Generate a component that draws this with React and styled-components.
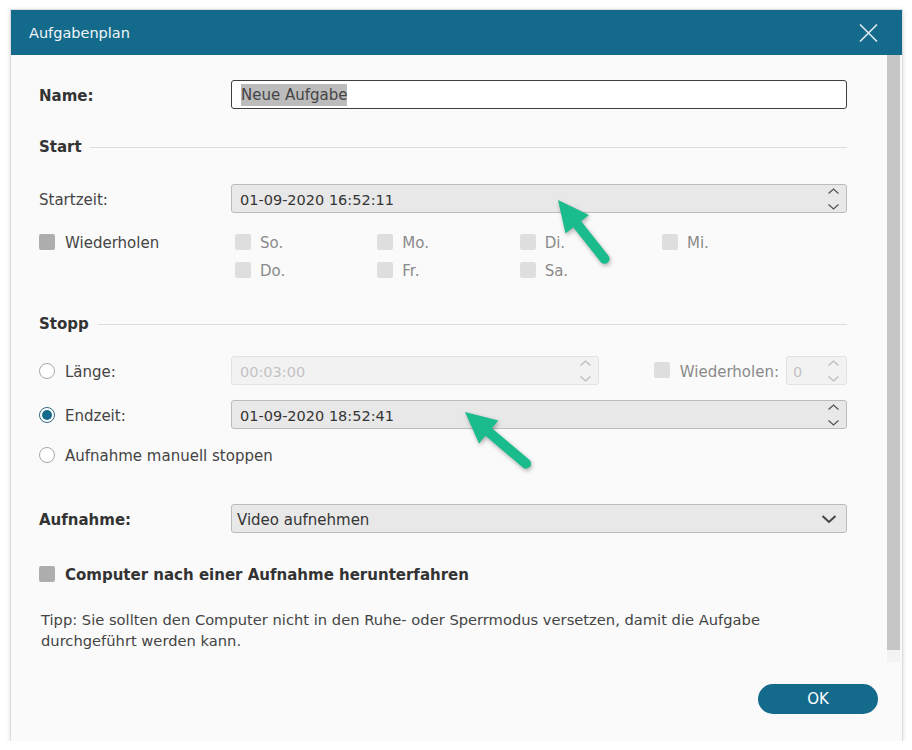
import React from "react";
import styled, { createGlobalStyle } from "styled-components";

const Global = createGlobalStyle`
  html, body { margin: 0; padding: 0; background: #ffffff; }
  body { font-family: "DejaVu Sans", Verdana, sans-serif; color: #3c3c3c; }
`;

const TEAL = "#136a8b";

const Page = styled.div`
  padding: 10px 0 0 11px;
`;

const Window = styled.div`
  position: relative;
  width: 891px;
  height: 731px;
  background: #fafafa;
  box-shadow: 0 0 0 1px #dcdcdc, 0 1px 5px rgba(0, 0, 0, 0.22);
  display: flex;
  flex-direction: column;
`;

const TitleBar = styled.div`
  height: 45px;
  flex: none;
  background: ${TEAL};
  display: flex;
  align-items: center;
  justify-content: space-between;
  padding: 0 24px 0 18px;
`;

const Title = styled.div`
  color: #f2f6f8;
  font-size: 14.5px;
`;

const CloseIcon = styled.svg`
  width: 19px;
  height: 18px;
  display: block;
`;

const Middle = styled.div`
  display: flex;
  height: 607px;
  flex: none;
`;

const Content = styled.div`
  flex: 1;
  padding: 25px 40px 0 28px;
  display: flex;
  flex-direction: column;
`;

const ScrollTrack = styled.div`
  width: 13px;
  margin-right: 2px;
  display: flex;
  flex-direction: column;
  background: #f3f3f3;
`;

const Thumb = styled.div`
  height: 595px;
  background: #c6c6c6;
`;

const Footer = styled.div`
  flex: 1;
  display: flex;
  justify-content: flex-end;
  align-items: flex-start;
  padding: 22px 24px 0 0;
`;

const OkButton = styled.button`
  width: 120px;
  height: 30px;
  border: none;
  border-radius: 15px;
  background: ${TEAL};
  color: #ffffff;
  font-family: "DejaVu Sans", sans-serif;
  font-size: 15px;
  padding: 0;
`;

const Row = styled.div`
  display: grid;
  grid-template-columns: 192px 1fr;
  align-items: center;
  height: ${(p) => p.$h}px;
  margin-top: ${(p) => p.$mt || 0}px;
  flex: none;
`;

const Label = styled.div`
  font-size: 15px;
  font-weight: ${(p) => (p.$bold ? 700 : 400)};
  color: ${(p) => (p.$bold ? "#333" : "#444")};
  display: flex;
  align-items: center;
  gap: 10px;
  white-space: nowrap;
  line-height: 20px;
  padding-top: 2px;
`;

const Heading = styled.div`
  display: flex;
  align-items: center;
  gap: ${(p) => p.$gap}px;
  height: 20px;
  margin-top: ${(p) => p.$mt}px;
  font-size: 15px;
  font-weight: 700;
  color: #333;
  flex: none;
  &::after {
    content: "";
    flex: 1;
    border-top: 1px solid #dcdcdc;
  }
`;

const TextInput = styled.div`
  height: 29px;
  box-sizing: border-box;
  border: 1px solid #3e3e3e;
  border-radius: 3px;
  background: #ffffff;
  display: flex;
  align-items: center;
  padding-left: 9px;
`;

const Selected = styled.span`
  background: #bcbcbc;
  color: #454545;
  font-size: 15px;
  line-height: 21px;
  padding-top: 1px;
`;

const SpinBox = styled.div`
  height: 29px;
  width: ${(p) => (p.$w ? `${p.$w}px` : "auto")};
  box-sizing: border-box;
  border: 1px solid ${(p) => (p.$disabled ? "#e2e2e2" : "#bcbcbc")};
  border-radius: 3px;
  background: ${(p) => (p.$disabled ? "#f2f2f2" : "#e8e8e8")};
  display: flex;
  align-items: center;
  padding-left: ${(p) => p.$pl || 8}px;
  padding-right: 6px;
  font-size: 14.5px;
  color: ${(p) => (p.$disabled ? "#c2c2c2" : "#353535")};
`;

const Value = styled.div`
  flex: 1;
  padding-top: 2px;
`;

const SpinIcon = styled.svg`
  width: 13px;
  height: 24px;
  display: block;
`;

const Spinner = ({ disabled }) => (
  <SpinIcon viewBox="0 0 13 24">
    <path
      d="M1.5 6.5 L6.5 2 L11.5 6.5 M1.5 17.5 L6.5 22 L11.5 17.5"
      fill="none"
      stroke={disabled ? "#bdbdbd" : "#555"}
      strokeWidth="1.3"
    />
  </SpinIcon>
);

const Box = styled.span`
  width: 16px;
  height: 16px;
  border-radius: 2px;
  background: ${(p) => (p.$dark ? "#adadad" : "#dedede")};
  flex: none;
  display: inline-block;
  margin-top: -2px;
`;

const Radio = styled.span`
  width: 16px;
  height: 16px;
  box-sizing: border-box;
  border-radius: 50%;
  border: 1px solid ${(p) => (p.$checked ? "#2d6a86" : "#a8a8a8")};
  background: #ffffff;
  flex: none;
  display: inline-flex;
  align-items: center;
  justify-content: center;
  margin-top: -2px;
  &::after {
    content: "";
    width: 10px;
    height: 10px;
    border-radius: 50%;
    background: ${(p) => (p.$checked ? TEAL : "transparent")};
  }
`;

const DayGrid = styled.div`
  display: grid;
  grid-template-columns: 192px repeat(4, 142.33px);
  grid-auto-rows: 28px;
  margin-top: 15px;
  flex: none;
  align-items: center;
`;

const Day = styled.div`
  display: flex;
  align-items: center;
  gap: 9px;
  padding: 2px 0 0 4px;
  font-size: 15px;
  color: #8a8a8a;
`;

const LengthField = styled.div`
  display: flex;
  align-items: center;
  justify-content: space-between;
`;

const RepeatGroup = styled.div`
  display: flex;
  align-items: center;
  font-size: 15px;
  color: #8a8a8a;
`;

const RepeatLabel = styled.span`
  margin: 2px 7px 0 10px;
`;

const Select = styled.div`
  height: 29px;
  box-sizing: border-box;
  border: 1px solid #bcbcbc;
  border-radius: 3px;
  background: #e8e8e8;
  display: flex;
  align-items: center;
  justify-content: space-between;
  padding: 0 9px 0 5px;
  font-size: 15px;
  color: #353535;
`;

const SelectText = styled.span`
  padding-top: 2px;
`;

const ChevronDown = styled.svg`
  width: 16px;
  height: 10px;
  display: block;
`;

const ShutdownRow = styled.div`
  display: flex;
  align-items: center;
  gap: 10px;
  height: 20px;
  margin-top: 32px;
  font-size: 15px;
  font-weight: 700;
  color: #333;
  flex: none;
`;

const Tip = styled.p`
  margin: 24px 0 0 2px;
  font-size: 14.7px;
  line-height: 21px;
  color: #444;
`;

const Overlay = styled.svg`
  position: absolute;
  left: 0;
  top: 0;
  width: 891px;
  height: 731px;
  pointer-events: none;
  overflow: visible;
  filter: drop-shadow(1px 2px 2px rgba(0, 0, 0, 0.3));
`;

const Arrow = ({ x, y, angle, len }) => (
  <g transform={`translate(${x} ${y}) rotate(${angle})`}>
    <polygon points="0,0 31,-15 31,15" fill="#1abb8c" />
    <line
      x1="26"
      y1="0"
      x2={len - 5}
      y2="0"
      stroke="#1abb8c"
      strokeWidth="10"
      strokeLinecap="round"
    />
  </g>
);

const days = [
  ["So.", 2, 1],
  ["Mo.", 3, 1],
  ["Di.", 4, 1],
  ["Mi.", 5, 1],
  ["Do.", 2, 2],
  ["Fr.", 3, 2],
  ["Sa.", 4, 2],
];

export default function App() {
  return (
    <>
      <Global />
      <Page>
        <Window>
          <TitleBar>
            <Title>Aufgabenplan</Title>
            <CloseIcon viewBox="0 0 19 18">
              <path
                d="M1 0.5 L18 17.5 M18 0.5 L1 17.5"
                stroke="#dfe9ee"
                strokeWidth="1.6"
                fill="none"
              />
            </CloseIcon>
          </TitleBar>
          <Middle>
            <Content>
              <Row $h={29}>
                <Label $bold>Name:</Label>
                <TextInput>
                  <Selected>Neue Aufgabe</Selected>
                </TextInput>
              </Row>

              <Heading $mt={28} $gap={8}>Start</Heading>

              <Row $h={29} $mt={27}>
                <Label>Startzeit:</Label>
                <SpinBox>
                  <Value>01-09-2020 16:52:11</Value>
                  <Spinner />
                </SpinBox>
              </Row>

              <DayGrid>
                <Label style={{ gridColumn: 1, gridRow: 1 }}>
                  <Box $dark />
                  Wiederholen
                </Label>
                {days.map(([d, c, r]) => (
                  <Day key={d} style={{ gridColumn: c, gridRow: r }}>
                    <Box />
                    {d}
                  </Day>
                ))}
              </DayGrid>

              <Heading $mt={30} $gap={9}>Stopp</Heading>

              <Row $h={29} $mt={22}>
                <Label>
                  <Radio />
                  Länge:
                </Label>
                <LengthField>
                  <SpinBox $w={368} $disabled>
                    <Value>00:03:00</Value>
                    <Spinner disabled />
                  </SpinBox>
                  <RepeatGroup>
                    <Box />
                    <RepeatLabel>Wiederholen:</RepeatLabel>
                    <SpinBox $w={61} $disabled $pl={6}>
                      <Value>0</Value>
                      <Spinner disabled />
                    </SpinBox>
                  </RepeatGroup>
                </LengthField>
              </Row>

              <Row $h={29} $mt={15}>
                <Label>
                  <Radio $checked />
                  Endzeit:
                </Label>
                <SpinBox>
                  <Value>01-09-2020 18:52:41</Value>
                  <Spinner />
                </SpinBox>
              </Row>

              <Row $h={24} $mt={14}>
                <Label>
                  <Radio />
                  Aufnahme manuell stoppen
                </Label>
              </Row>

              <Row $h={29} $mt={37}>
                <Label $bold>Aufnahme:</Label>
                <Select>
                  <SelectText>Video aufnehmen</SelectText>
                  <ChevronDown viewBox="0 0 16 10">
                    <path
                      d="M1.5 2 L8 8 L14.5 2"
                      fill="none"
                      stroke="#444"
                      strokeWidth="2"
                    />
                  </ChevronDown>
                </Select>
              </Row>

              <ShutdownRow>
                <Box $dark />
                Computer nach einer Aufnahme herunterfahren
              </ShutdownRow>

              <Tip>
                Tipp: Sie sollten den Computer nicht in den Ruhe- oder
                Sperrmodus versetzen, damit die Aufgabe durchgeführt werden
                kann.
              </Tip>
            </Content>
            <ScrollTrack>
              <Thumb />
            </ScrollTrack>
          </Middle>
          <Footer>
            <OkButton>OK</OkButton>
          </Footer>
          <Overlay viewBox="0 0 891 731">
            <Arrow x={547} y={190} angle={51.6} len={80} />
            <Arrow x={454} y={402} angle={40.2} len={85} />
          </Overlay>
        </Window>
      </Page>
    </>
  );
}
